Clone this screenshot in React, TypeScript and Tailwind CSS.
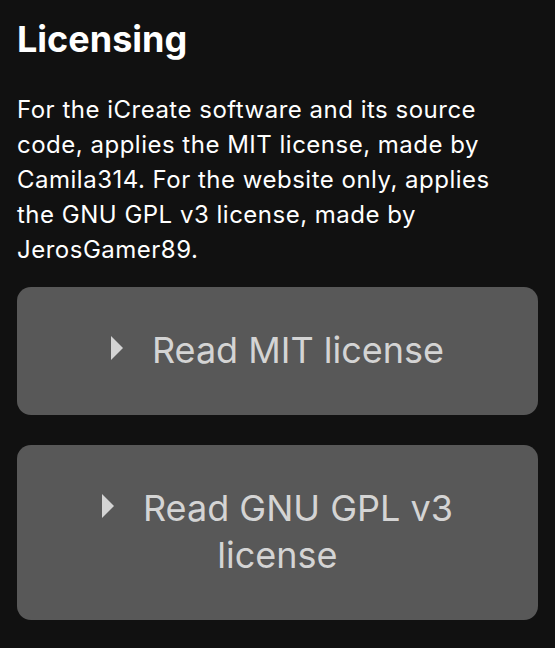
function Triangle() {
  return (
    <svg
      width="12"
      height="24"
      viewBox="0 0 12 24"
      className="mr-[29px] inline-block align-[3px]"
      fill="#d4d4d4"
    >
      <path d="M0 0 L12 12 L0 24 Z" />
    </svg>
  );
}

function LicenseButton({ label }: { label: string }) {
  return (
    <div className="rounded-[14px] bg-[#585858] px-10 py-10 text-center text-[36px] leading-[47.5px] text-[#d4d4d4]">
      <Triangle />
      {label}
    </div>
  );
}

export default function App() {
  return (
    <div className="min-h-[648px] bg-[#111111] px-[17px] pt-[18px] font-['Inter',sans-serif] text-white">
      <h1 className="text-[36px] font-bold leading-[43px]">Licensing</h1>
      <p className="mt-[31px] max-w-[505px] text-[24px] leading-[35px] tracking-[0.5px]">
        For the iCreate software and its source code, applies the MIT license, made by Camila314.
        For the website only, applies the GNU GPL v3 license, made by JerosGamer89.
      </p>
      <div className="mt-[20px] flex flex-col gap-[30px]">
        <LicenseButton label="Read MIT license" />
        <LicenseButton label="Read GNU GPL v3 license" />
      </div>
    </div>
  );
}
